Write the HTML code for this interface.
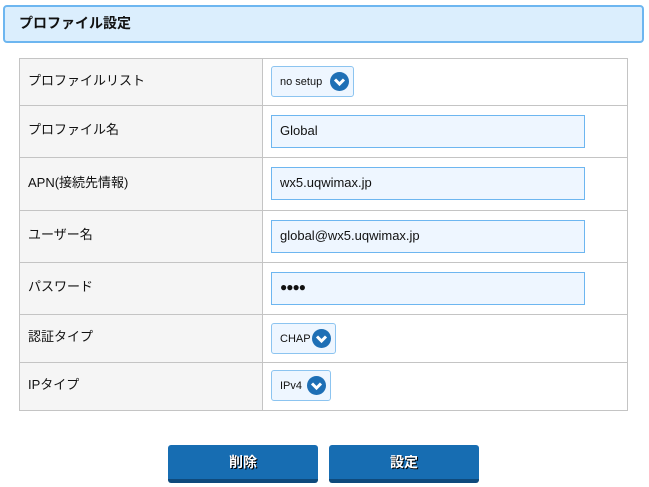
<!DOCTYPE html>
<html><head><meta charset="utf-8"><style>
*{margin:0;padding:0;box-sizing:border-box}
body{width:649px;height:487px;background:#fff;position:relative;font-family:"Liberation Sans","Noto Sans CJK JP",sans-serif;color:#111;overflow:hidden}
.hdr{position:absolute;left:3px;top:5px;width:641px;height:38px;background:#dbeefd;border:2px solid #6db6f0;border-radius:4px;font-size:14px;font-weight:bold;padding:6px 0 0 14px}
.tbl{position:absolute;left:19px;top:58px;width:609px;height:353px;border:1px solid #c4c4c4}
.row{position:absolute;left:0;width:607px;border-top:1px solid #c4c4c4}
.lab{position:absolute;left:0;top:0;bottom:0;width:243px;background:#f5f5f5;border-right:1px solid #c4c4c4;font-size:13px;padding-left:8px;padding-bottom:6px;display:flex;align-items:center}
.inp{position:absolute;left:271px;width:314px;height:33px;background:#eef6ff;border:1px solid #6db6f0;font-size:13px;padding-left:8px;line-height:29px}
.sel{position:absolute;left:271px;height:31px;background:#eef6ff;border:1px solid #8cc4f0;border-radius:3px;font-size:11px;padding-left:8px;display:flex;align-items:center}
.ic{position:absolute;right:4px;top:5px;width:19px;height:19px;border-radius:50%;background:#1e6fb5}
.ic svg{position:absolute;left:0;top:0}
.btn{position:absolute;top:445px;width:150px;height:38px;background:#176db2;border-bottom:4px solid #0f4a7c;border-radius:3px;color:#fff;font-weight:bold;font-size:14px;text-align:center;line-height:34px;text-shadow:1px 1px 0 #000}
</style></head><body>
<div class="hdr">プロファイル設定</div>
<div class="tbl">
<div class="row" style="top:0;height:46px;border-top:none"><div class="lab">プロファイルリスト</div></div>
<div class="row" style="top:46px;height:52px"><div class="lab">プロファイル名</div></div>
<div class="row" style="top:98px;height:53px"><div class="lab">APN(接続先情報)</div></div>
<div class="row" style="top:151px;height:52px"><div class="lab">ユーザー名</div></div>
<div class="row" style="top:203px;height:52px"><div class="lab">パスワード</div></div>
<div class="row" style="top:255px;height:48px"><div class="lab">認証タイプ</div></div>
<div class="row" style="top:303px;height:48px"><div class="lab">IPタイプ</div></div>
</div>
<div class="sel" style="top:66px;width:83px">no setup<span class="ic"><svg width="19" height="19"><path d="M5 7.5l4.5 4.5 4.5-4.5" stroke="#fff" stroke-width="3" fill="none"/></svg></span></div>
<div class="inp" style="top:115px">Global</div>
<div class="inp" style="top:167px">wx5.uqwimax.jp</div>
<div class="inp" style="top:220px">global@wx5.uqwimax.jp</div>
<div class="inp" style="top:272px;font-size:12px;letter-spacing:-1px">●●●●</div>
<div class="sel" style="top:323px;width:65px">CHAP<span class="ic"><svg width="19" height="19"><path d="M5 7.5l4.5 4.5 4.5-4.5" stroke="#fff" stroke-width="3" fill="none"/></svg></span></div>
<div class="sel" style="top:370px;width:60px">IPv4<span class="ic"><svg width="19" height="19"><path d="M5 7.5l4.5 4.5 4.5-4.5" stroke="#fff" stroke-width="3" fill="none"/></svg></span></div>
<div class="btn" style="left:168px">削除</div>
<div class="btn" style="left:329px">設定</div>
</body></html>
